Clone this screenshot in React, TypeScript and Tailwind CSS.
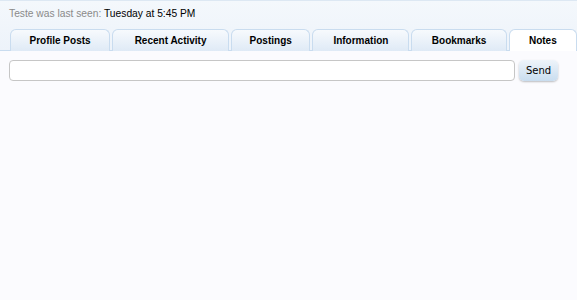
import { useState } from 'react';

const tabs = ['Profile Posts', 'Recent Activity', 'Postings', 'Information', 'Bookmarks', 'Notes'];
const widths = ['w-[101px]', 'w-[118px]', 'w-[80px]', 'w-[98px]', 'w-[96px]', 'w-[69px]'];

export default function App() {
  const [active, setActive] = useState('Notes');
  const [note, setNote] = useState('');

  return (
    <div className="min-h-[300px] bg-[#fbfbfe] font-['Liberation_Sans',Arial,sans-serif] text-[11px] text-black">
      <div className="bg-gradient-to-b from-[#f4f8fc] to-[#edf3fa] border-t border-[#dde8f3]">
        <div className="px-[9px] pt-[6px] pb-[9px] text-[10.25px] leading-[13px]">
          <span className="text-[#8a8a8a]">Teste was last seen:</span> <span>Tuesday at 5:45 PM</span>
        </div>
        <div className="flex gap-[2px] pl-[10px] border-b border-[#c9dcef]">
          {tabs.map((t, i) => (
            <button
              key={t}
              onClick={() => setActive(t)}
              className={`${widths[i]} h-[22px] -mb-px rounded-t-[6px] border border-b-0 border-[#c9dcef] text-[10px] font-bold ${
                active === t
                  ? 'bg-white border-b border-b-white'
                  : 'bg-gradient-to-b from-[#f7fafd] to-[#dfeaf6]'
              }`}
            >
              {t}
            </button>
          ))}
        </div>
      </div>
      <div className="flex items-center gap-[4px] pl-[9px] pt-[9px]">
        <input
          value={note}
          onChange={e => setNote(e.target.value)}
          className="w-[506px] h-[21px] rounded-[4px] border border-[#c6c6c6] bg-white px-1 outline-none"
        />
        <button className="w-[39px] h-[21px] rounded-[5px] bg-gradient-to-b from-[#eef4fa] to-[#c9ddef] shadow-[0_1px_2px_rgba(0,0,0,0.25)] text-[10px] font-['DejaVu_Sans',sans-serif]">
          Send
        </button>
      </div>
    </div>
  );
}
